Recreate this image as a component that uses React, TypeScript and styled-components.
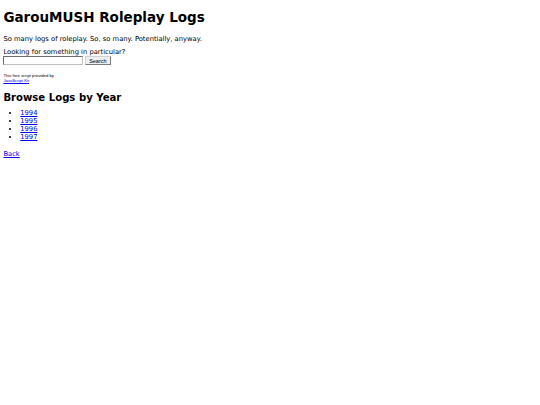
import styled, { createGlobalStyle } from "styled-components";

const GlobalStyle = createGlobalStyle`
  html, body {
    margin: 0;
    padding: 0;
    background: #ffffff;
    -webkit-font-smoothing: antialiased;
  }
`;

// the original page laid out at 1280px wide, shown at 540px
const Page = styled.div`
  zoom: 0.421875;
  width: 1264px;
  padding: 0 8px;
  font-family: "DejaVu Sans", Verdana, sans-serif;
  font-size: 16px;
  color: #000000;

  a {
    color: #0000ee;
  }
`;

const Title = styled.h1`
  font-size: 32px;
  font-weight: bold;
  margin: 21px 0 23px;
`;

const Intro = styled.p`
  margin: 16px 0 14px;
`;

const SearchForm = styled.form`
  margin: 0 0 16px;
`;

const SearchRow = styled.div`
  display: flex;
  align-items: center;
  gap: 5px;
`;

const SearchInput = styled.input`
  box-sizing: border-box;
  width: 188px;
  height: 21px;
  padding: 1px 2px;
  border: 2px inset #c0c0c0;
  font-size: 13px;
`;

const SearchButton = styled.button`
  box-sizing: border-box;
  height: 21px;
  padding: 1px 8px;
  font-family: "Liberation Sans", Arial, sans-serif;
  font-size: 13px;
  border: 2px outset #d0d0d0;
  background: #efefef;
`;

const Credit = styled.div`
  font-family: "Liberation Sans", Arial, sans-serif;
  font-size: 10px;
  line-height: 12px;
  margin-top: 18px;
`;

const Heading = styled.h2`
  font-size: 24px;
  font-weight: bold;
  margin: 21px 0 15px;
`;

const YearList = styled.ul`
  margin: 15px 0 16px;
  padding-left: 40px;
`;

const BackLink = styled.a`
  display: block;
  margin: 21px 0 16px;
`;

export default function App() {
  const years = ["1994", "1995", "1996", "1997"];
  return (
    <>
      <GlobalStyle />
      <Page>
        <Title>GarouMUSH Roleplay Logs</Title>
        <Intro>So many logs of roleplay. So, so many. Potentially, anyway.</Intro>
        <SearchForm onSubmit={(e) => e.preventDefault()}>
          Looking for something in particular?
          <SearchRow>
            <SearchInput type="text" />
            <SearchButton type="submit">Search</SearchButton>
          </SearchRow>
          <Credit>
            This free script provided by
            <br />
            <a href="#">JavaScript Kit</a>
          </Credit>
        </SearchForm>
        <Heading>Browse Logs by Year</Heading>
        <YearList>
          {years.map((y) => (
            <li key={y}>
              <a href="#">{y}</a>
            </li>
          ))}
        </YearList>
        <BackLink href="#">Back</BackLink>
      </Page>
    </>
  );
}
